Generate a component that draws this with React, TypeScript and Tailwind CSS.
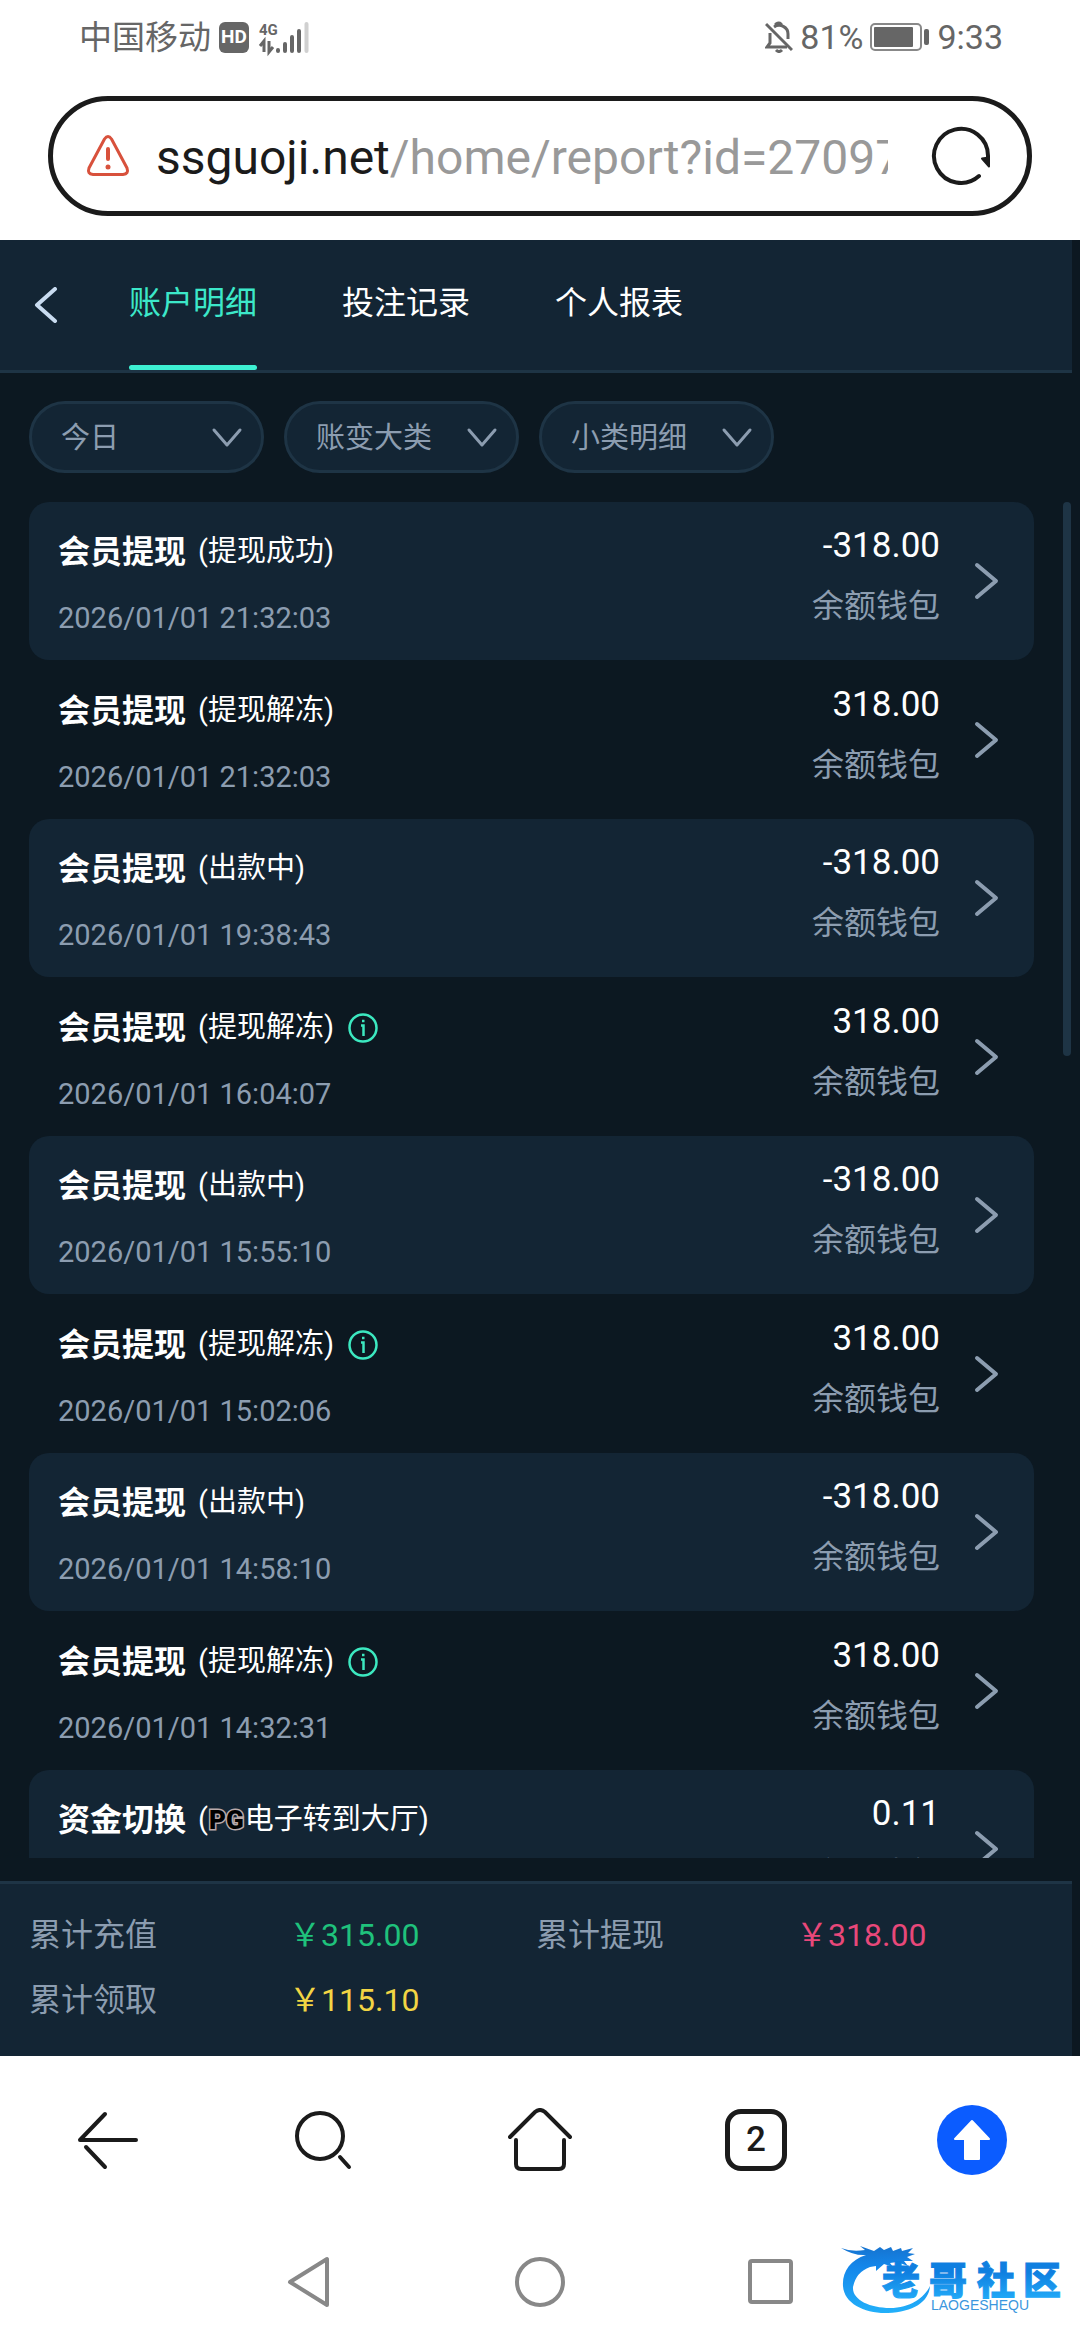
import { useState } from 'react'
import type { ReactNode } from 'react'

type Entry = {
  kind: string
  status: ReactNode
  time: string
  amount: string
  info?: boolean
}

const tabs = ['账户明细', '投注记录', '个人报表']
const filters = [
  { label: '日期', value: '今日' },
  { label: '账变类型', value: '账变大类' },
  { label: '明细类型', value: '小类明细' },
]

const entries: Entry[] = [
  { kind: '会员提现', status: '(提现成功)', time: '2026/01/01 21:32:03', amount: '-318.00' },
  { kind: '会员提现', status: '(提现解冻)', time: '2026/01/01 21:32:03', amount: '318.00' },
  { kind: '会员提现', status: '(出款中)', time: '2026/01/01 19:38:43', amount: '-318.00' },
  { kind: '会员提现', status: '(提现解冻)', time: '2026/01/01 16:04:07', amount: '318.00', info: true },
  { kind: '会员提现', status: '(出款中)', time: '2026/01/01 15:55:10', amount: '-318.00' },
  { kind: '会员提现', status: '(提现解冻)', time: '2026/01/01 15:02:06', amount: '318.00', info: true },
  { kind: '会员提现', status: '(出款中)', time: '2026/01/01 14:58:10', amount: '-318.00' },
  { kind: '会员提现', status: '(提现解冻)', time: '2026/01/01 14:32:31', amount: '318.00', info: true },
  { kind: '资金切换', status: <>(<PgMark />电子转到大厅)</>, time: '', amount: '0.11' },
]

const totals = [
  { label: '累计充值', value: '￥315.00', color: 'text-[#1fc27c]' },
  { label: '累计提现', value: '￥318.00', color: 'text-[#e8487a]' },
  { label: '累计领取', value: '￥115.10', color: 'text-[#f2d544]' },
]

function PgMark() {
  return (
    <span className="mx-px text-[26px] leading-none font-black text-black [-webkit-text-stroke:3px_#b9aaaa] [paint-order:stroke_fill]">
      PG
    </span>
  )
}

function StatusBar() {
  return (
    <div className="flex h-[74px] items-center justify-between pr-[77px] pl-[79px] text-[34px] text-[#666]">
      <div className="flex items-center">
        <span className="text-[33px] leading-none">中国移动</span>
        <span className="ml-2 flex h-[31px] w-[30px] items-center justify-center rounded-md bg-[#666] text-[19px] font-bold text-white">HD</span>
        {/* Signal */}
        <svg className="ml-[10px] overflow-visible" width="52" height="34" viewBox="0 0 52 34">
          <text x="0" y="15" fontSize="15" fontWeight="bold" fill="#666">4G</text>
          <path d="M1 26l4-5v11M10 21v11l4-5" fill="none" stroke="#666" strokeWidth="3" />
          <path d="M19 30v1M26 24v7M33 17v14M40 11v20" stroke="#666" strokeWidth="4" strokeLinecap="round" />
          <path d="M47.500 4v27" stroke="#d0d0d0" strokeWidth="4" strokeLinecap="round" />
        </svg>
      </div>
      <div className="flex items-center gap-[7px]">
        {/* Muted bell */}
        <svg width="28" height="32" viewBox="0 0 28 32" fill="none" stroke="#666" strokeWidth="3">
          <path d="M5 12v10l-3 4h20M9 6c6-4 14 0 14 7v5" />
          <path d="M11 5V3q3-2 5 0v2M1 3l26 26" />
          <path d="M11 29q3 3 6 0" />
        </svg>
        <span>81%</span>
        {/* Battery */}
        <svg width="60" height="30" viewBox="0 0 60 30">
          <rect x="1" y="2" width="50" height="26" rx="4" fill="none" stroke="#888" strokeWidth="2" />
          <rect x="4" y="5" width="39" height="20" rx="1" fill="#666" />
          <rect x="54" y="7" width="5" height="16" rx="2" fill="#666" />
        </svg>
        <span>9:33</span>
      </div>
    </div>
  )
}

function AddressBar() {
  return (
    <div className="mx-12 mt-[22px] mb-6 flex h-[120px] items-center rounded-full border-[5px] border-[#1b1b1b] pr-[35px] pl-[33px]">
      <svg width="44" height="42" viewBox="0 0 44 42" fill="none" stroke="#d8513c" strokeWidth="3" strokeLinejoin="round">
        <path d="M18.500 4q3.500-5 7 0l15.500 29q2 6-4 6.500H7q-6-.5-4-6.500z" />
        <path d="M22 14v10" strokeWidth="4" strokeLinecap="round" />
        <circle cx="22" cy="32" r="2.500" fill="#d8513c" stroke="none" />
      </svg>
      <div className="ml-[26px] min-w-0 flex-1 overflow-hidden pt-1 text-[48px] leading-[64px] whitespace-nowrap text-[#1b1b1b]">
        ssguoji.net<span className="text-[#999]">/home/report?id=27097</span>
      </div>
      <button aria-label="刷新" className="ml-[42px]">
        <svg width="62" height="62" viewBox="0 0 62 62" fill="none" stroke="#1b1b1b" strokeWidth="4" strokeLinecap="round">
          <path d="M49 51a27 27 0 1 1 9-20v5" />
          <path d="M52 33.500l7-1v9z" fill="#1b1b1b" strokeWidth="2" strokeLinejoin="round" />
        </svg>
      </button>
    </div>
  )
}

function Row({ entry, shaded }: { entry: Entry; shaded: boolean }) {
  return (
    <li className={shaded ? 'h-[158px] rounded-[20px] bg-[#132534]' : 'h-[159px]'}>
      <a href="#detail" className="flex h-full items-center justify-between pr-[33px] pl-[29px]">
        <div className="flex flex-col gap-[22px] pt-1">
          <div className="flex h-12 items-center text-white">
            <span className="text-[32px] font-bold">{entry.kind}</span>
            <span className="ml-3 text-[29px]">{entry.status}</span>
            {entry.info && (
              <svg className="ml-[14px]" width="30" height="30" viewBox="0 0 30 30" fill="none" stroke="#3ce8c0" strokeWidth="2.500">
                <circle cx="15" cy="15" r="13.500" />
                <path d="M13 12.500h2.500V23M14 8h2.500" />
              </svg>
            )}
          </div>
          <span className="h-10 text-[29px] leading-10 text-[#8c9db0]">{entry.time}</span>
        </div>
        <div className="flex items-center gap-[33px]">
          <div className="flex flex-col items-end gap-3 pb-[10px]">
            <span className="h-12 text-[35px] leading-[48px] text-white">{entry.amount}</span>
            <span className="h-12 text-[32px] leading-[48px] text-[#8c9db0]">余额钱包</span>
          </div>
          <svg width="28" height="40" viewBox="0 0 28 40" fill="none" stroke="#8c9db0" strokeWidth="4" strokeLinecap="round" strokeLinejoin="round">
            <path d="M4 4l19 16L4 36" />
          </svg>
        </div>
      </a>
    </li>
  )
}

function BrowserNav() {
  return (
    <nav className="grid h-[168px] grid-cols-5 place-items-center">
      <button aria-label="后退">
        <svg width="64" height="64" viewBox="0 0 64 64" fill="none" stroke="#1b1b1b" strokeWidth="4" strokeLinecap="round">
          <path d="M60 32H4L29 6" strokeLinejoin="round" />
          <path d="M10 39l19 20" />
        </svg>
      </button>
      <button aria-label="搜索">
        <svg width="64" height="64" viewBox="0 0 64 64" fill="none" stroke="#1b1b1b" strokeWidth="4" strokeLinecap="round">
          <circle cx="28" cy="28" r="23" />
          <path d="M48 49l9 10" />
        </svg>
      </button>
      <button aria-label="主页">
        <svg width="64" height="64" viewBox="0 0 64 64" fill="none" stroke="#1b1b1b" strokeWidth="4" strokeLinecap="round">
          <path d="M2 29L27 4q5-4 10 0l25 25" />
          <path d="M8 32v24q0 5 5 5h38q5 0 5-5V32" />
        </svg>
      </button>
      <button aria-label="标签页" className="flex size-[62px] items-center justify-center rounded-[16px] border-[5px] border-[#1b1b1b] text-[35px] font-medium text-[#1b1b1b]">
        2
      </button>
      <button aria-label="返回顶部">
        <svg width="70" height="70" viewBox="0 0 70 70">
          <circle cx="35" cy="35" r="35" fill="#0b5cff" />
          <path d="M35 16L52 34H42V54H28V34H18z" fill="#fff" stroke="#fff" strokeWidth="2" strokeLinejoin="round" />
        </svg>
      </button>
    </nav>
  )
}

function SystemNav() {
  return (
    <nav className="flex h-[116px] items-center justify-center gap-[180px]">
      <button aria-label="系统返回">
        <svg width="50" height="52" viewBox="0 0 50 52" fill="none" stroke="#888" strokeWidth="4" strokeLinejoin="round">
          <path d="M43 3v46L6 26z" />
        </svg>
      </button>
      <button aria-label="系统主页">
        <svg width="52" height="52" viewBox="0 0 52 52" fill="none" stroke="#888" strokeWidth="4">
          <circle cx="26" cy="26" r="23" />
        </svg>
      </button>
      <button aria-label="最近任务">
        <svg width="50" height="52" viewBox="0 0 50 52" fill="none" stroke="#888" strokeWidth="4">
          <rect x="4" y="5" width="41" height="41" rx="2" />
        </svg>
      </button>
    </nav>
  )
}

function CommunityLogo() {
  return (
    <svg className="absolute right-3 bottom-5 h-20 w-[230px]" viewBox="0 0 230 80">
      <defs>
        <linearGradient id="dragon" x1="0" y1="0" x2="0" y2="1">
          <stop offset="0" stopColor="#1673cf" />
          <stop offset="0.300" stopColor="#1486ea" />
          <stop offset="1" stopColor="#22b0fa" />
        </linearGradient>
        <linearGradient id="name" x1="0" y1="0" x2="0" y2="1">
          <stop offset="0.300" stopColor="#0f7fe0" />
          <stop offset="1" stopColor="#25b0fb" />
        </linearGradient>
      </defs>
      {/* Dragon: whiskers and head, then the body curling round */}
      <path
        fill="url(#dragon)"
        d="M3 8q10 4 24 2l-5-4 14 5 6-4 4 3 7-3 2 4 8-3 1 3 11-3-5 5 7 1-8 3 6 4-9 0 4 5-11-4-7 1 3 4-9-3-8 7 0-5-6 1q-14 5-17 20C14 60 32 68 52 68 72 68 86 58 92 46 91 62 75 72 50 73 28 74 6 64 5 46 4 32 12 20 28 15q-12 1-25-7z"
      />
      <g fontSize="38" fontWeight="900" fill="url(#name)" stroke="url(#name)" strokeWidth="1">
        <text x="44" y="54">老</text>
        <text x="91" y="54">哥</text>
        <text x="139" y="54">社</text>
        <text x="185" y="54">区</text>
      </g>
      <text x="93" y="70" fontSize="14" fill="#3b97de" className="font-['Liberation_Sans',sans-serif]">LAOGESHEQU</text>
    </svg>
  )
}

export default function App() {
  const [active, setActive] = useState(0)

  return (
    <div className="relative flex min-h-screen flex-col bg-white font-[Roboto,'Noto_Sans_CJK_SC',sans-serif]">
      <StatusBar />
      <AddressBar />

      <main className="bg-[#0c1821]">
        {/* Header tabs */}
        <header className="mr-2 flex h-[133px] border-b-[3px] border-[#1e3445] bg-[#132534]">
          <button aria-label="返回" className="flex w-[129px] items-center pl-[33px]">
            <svg width="26" height="36" viewBox="0 0 26 36" fill="none" stroke="#c9dcf0" strokeWidth="4" strokeLinecap="round" strokeLinejoin="round">
              <path d="M22 2L4 18l18 16" />
            </svg>
          </button>
          <div className="flex gap-[85px]">
            {tabs.map((tab, i) => (
              <button
                key={tab}
                onClick={() => setActive(i)}
                className={
                  i === active
                    ? 'flex flex-col items-center justify-between text-[32px] text-[#3ce8c9]'
                    : 'flex flex-col items-center justify-between text-[32px] text-white'
                }
              >
                <span className="mt-[39px] leading-[48px]">{tab}</span>
                {i === active && <span className="h-[5px] w-full rounded-full bg-[#3df0d2]" />}
              </button>
            ))}
          </div>
        </header>

        {/* Filters */}
        <div className="flex gap-5 px-[29px] pt-7 pb-[29px]">
          {filters.map(f => (
            <label key={f.label} className="relative flex">
              <select
                aria-label={f.label}
                className="h-[72px] w-[235px] appearance-none rounded-full border-[3px] border-[#1e3445] bg-[#132534] pt-1 pl-[29px] text-[29px] text-[#8c9db0]"
              >
                <option>{f.value}</option>
              </select>
              <svg className="pointer-events-none absolute top-[25px] right-5" width="34" height="24" viewBox="0 0 34 24" fill="none" stroke="#8c9db0" strokeWidth="3" strokeLinecap="round" strokeLinejoin="round">
                <path d="M4 4l13 15L30 4" />
              </svg>
            </label>
          ))}
        </div>

        {/* Entries */}
        <div className="flex h-[1356px] justify-between overflow-hidden pr-[9px] pl-[29px]">
          <ul className="mr-[29px] flex-1">
            {entries.map((entry, i) => (
              <Row key={i} entry={entry} shaded={i % 2 === 0} />
            ))}
          </ul>
          <div className="h-[554px] w-2 rounded-full bg-[#1e3445]" />
        </div>

        {/* Totals */}
        <footer className="mt-[23px] mr-2 border-t-[3px] border-[#1e3445] bg-[#132534] px-[29px] pt-[18px] pb-6">
          <dl className="grid grid-cols-2">
            {totals.map(t => (
              <div key={t.label} className="flex h-[65px] items-center text-[32px]">
                <dt className="w-[260px] text-[#8c9db0]">{t.label}</dt>
                <dd className={t.color}>{t.value}</dd>
              </div>
            ))}
          </dl>
        </footer>
      </main>

      <BrowserNav />
      <SystemNav />
      <CommunityLogo />
    </div>
  )
}
